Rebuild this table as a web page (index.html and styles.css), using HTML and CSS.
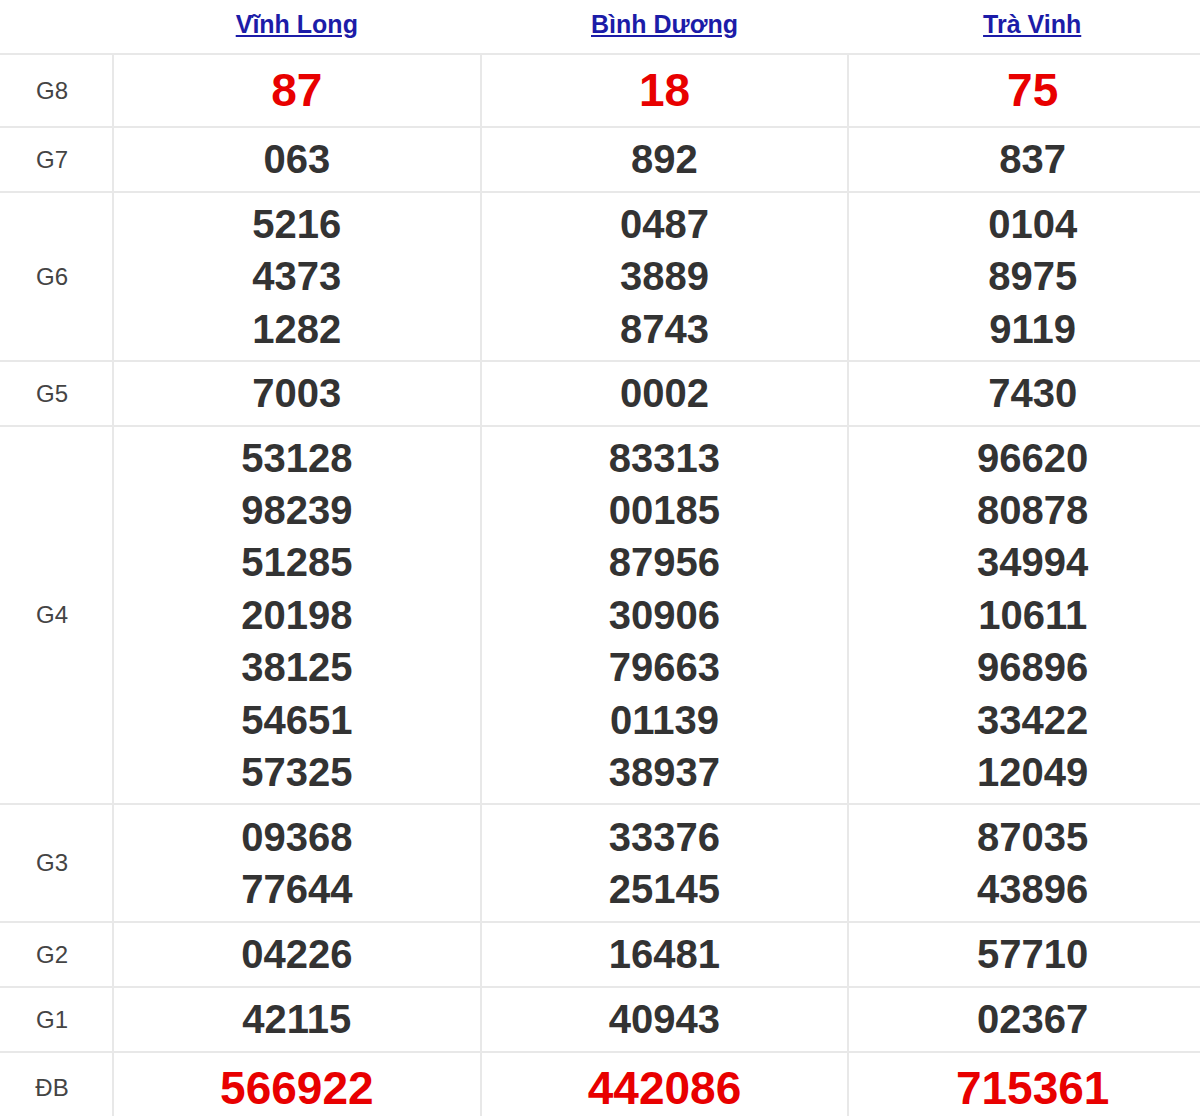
FILE: index.html
```html
<!DOCTYPE html>
<html lang="vi">
<head>
<meta charset="utf-8">
<title>Kết quả xổ số</title>
<link rel="stylesheet" href="styles.css">
</head>
<body>
<table class="kq">
  <colgroup>
    <col class="c-label">
    <col class="c-prov">
    <col class="c-prov">
    <col class="c-prov">
  </colgroup>
  <thead>
    <tr class="r-head">
      <th></th>
      <th><a href="#">Vĩnh Long</a></th>
      <th><a href="#">Bình Dương</a></th>
      <th><a href="#">Trà Vinh</a></th>
    </tr>
  </thead>
  <tbody>
    <tr class="r-g8">
      <td class="lbl">G8</td>
      <td class="num big red">87</td>
      <td class="num big red">18</td>
      <td class="num big red">75</td>
    </tr>
    <tr class="r-1">
      <td class="lbl">G7</td>
      <td class="num">063</td>
      <td class="num">892</td>
      <td class="num">837</td>
    </tr>
    <tr class="r-3">
      <td class="lbl">G6</td>
      <td class="num"><div>5216</div><div>4373</div><div>1282</div></td>
      <td class="num"><div>0487</div><div>3889</div><div>8743</div></td>
      <td class="num"><div>0104</div><div>8975</div><div>9119</div></td>
    </tr>
    <tr class="r-1">
      <td class="lbl">G5</td>
      <td class="num">7003</td>
      <td class="num">0002</td>
      <td class="num">7430</td>
    </tr>
    <tr class="r-7">
      <td class="lbl">G4</td>
      <td class="num"><div>53128</div><div>98239</div><div>51285</div><div>20198</div><div>38125</div><div>54651</div><div>57325</div></td>
      <td class="num"><div>83313</div><div>00185</div><div>87956</div><div>30906</div><div>79663</div><div>01139</div><div>38937</div></td>
      <td class="num"><div>96620</div><div>80878</div><div>34994</div><div>10611</div><div>96896</div><div>33422</div><div>12049</div></td>
    </tr>
    <tr class="r-2">
      <td class="lbl">G3</td>
      <td class="num"><div>09368</div><div>77644</div></td>
      <td class="num"><div>33376</div><div>25145</div></td>
      <td class="num"><div>87035</div><div>43896</div></td>
    </tr>
    <tr class="r-1">
      <td class="lbl">G2</td>
      <td class="num">04226</td>
      <td class="num">16481</td>
      <td class="num">57710</td>
    </tr>
    <tr class="r-1">
      <td class="lbl">G1</td>
      <td class="num">42115</td>
      <td class="num">40943</td>
      <td class="num">02367</td>
    </tr>
    <tr class="r-db">
      <td class="lbl">ĐB</td>
      <td class="num big red">566922</td>
      <td class="num big red">442086</td>
      <td class="num big red">715361</td>
    </tr>
  </tbody>
</table>
</body>
</html>
```

FILE: styles.css
```css
html, body {
  margin: 0;
  padding: 0;
  background: #fff;
  overflow: hidden;
}

body {
  font-family: "Liberation Sans", Arial, sans-serif;
}

.kq {
  width: 1216px;
  border-collapse: collapse;
  table-layout: fixed;
}

.c-label {
  width: 113px;
}

.kq th {
  height: 47px;
  padding: 0 0 6px;
  border-bottom: 2px solid #e8e8e8;
  text-align: center;
  vertical-align: middle;
  font-size: 25px;
  font-weight: bold;
  line-height: 28px;
}

.kq th a {
  color: #1c1ca8;
  text-decoration: underline;
  text-decoration-thickness: 2px;
  text-underline-offset: 2px;
}

.kq td {
  padding: 0;
  border-top: 2px solid #e8e8e8;
  border-bottom: 2px solid #e8e8e8;
  border-left: 2px solid #e8e8e8;
  text-align: center;
  vertical-align: middle;
}

.kq td.lbl {
  border-left: none;
  font-size: 24px;
  color: #444;
  padding-right: 8px;
}

.num {
  font-size: 40px;
  font-weight: bold;
  color: #333;
  line-height: 52.4px;
}

.num.big {
  font-size: 46px;
}

.red {
  color: #e80000;
}

.r-g8 td { height: 71px; }
.r-1 td { height: 63px; }
.r-2 td { height: 116px; }
.r-3 td { height: 167px; }
.r-7 td { height: 376px; }
.r-db td { height: 70px; }
```
